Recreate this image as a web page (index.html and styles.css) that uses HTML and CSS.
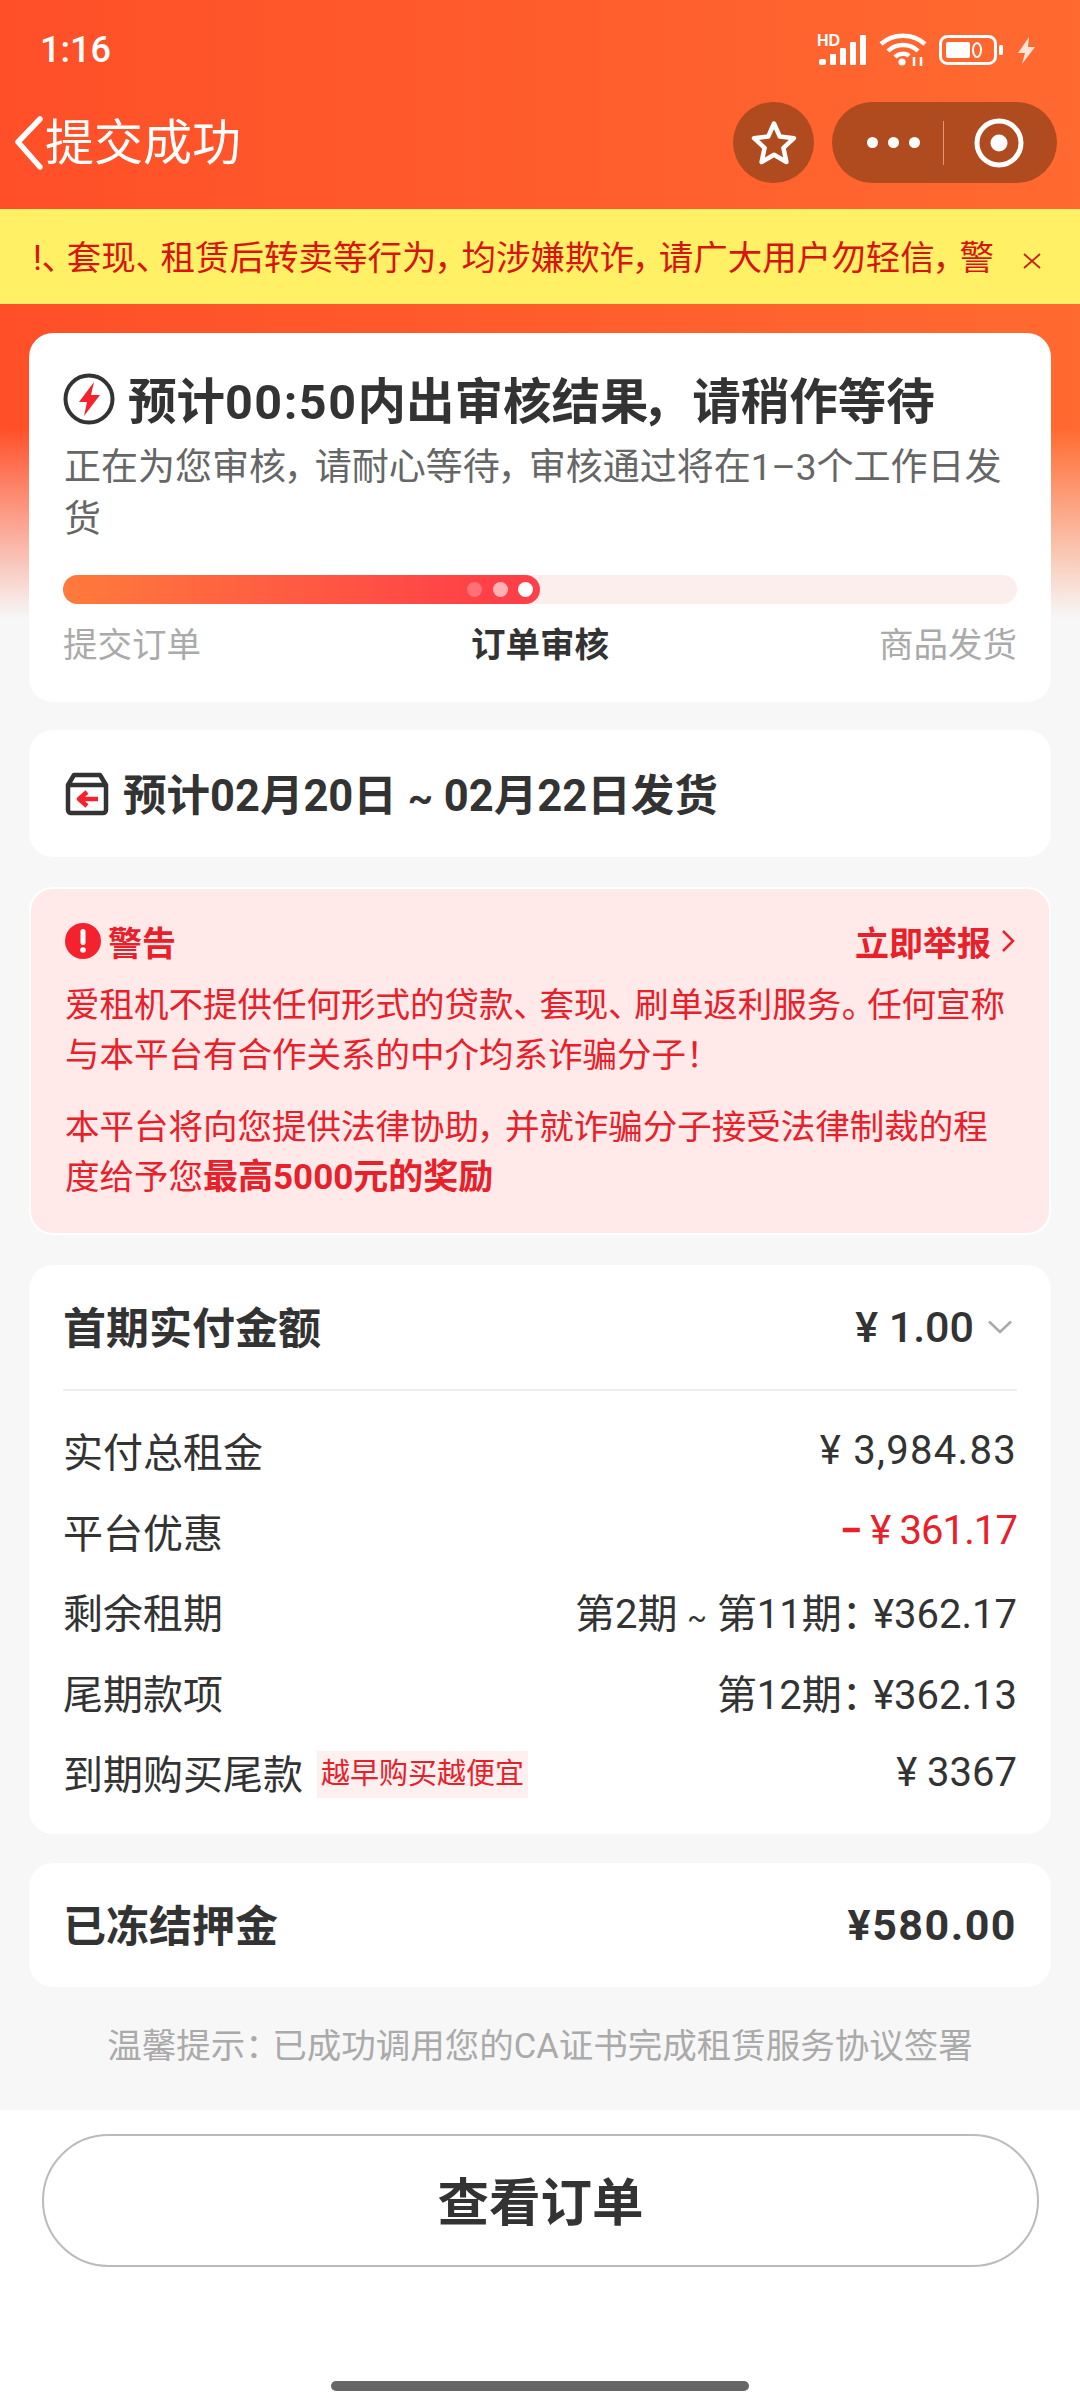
FILE: index.html
```html
<!DOCTYPE html>
<html lang="zh-CN">
<head>
<meta charset="utf-8">
<title>提交成功</title>
<link rel="stylesheet" href="styles.css">
</head>
<body>
<div class="page">
  <div class="statusbar">
    <span class="time">1:16</span>
    <div class="status-icons">
      <svg class="ic-signal" width="50" height="32" viewBox="0 0 50 32">
        <text class="hd" x="0" y="12">HD</text>
        <rect x="2" y="25" width="7" height="6" rx="2" fill="#fff"/>
        <rect x="13" y="20" width="6" height="11" rx="1" fill="#fff"/>
        <rect x="23" y="14" width="6" height="17" rx="1" fill="#fff"/>
        <rect x="33" y="8" width="6" height="23" rx="1" fill="#fff"/>
        <rect x="43" y="1" width="6" height="30" rx="1" fill="#fff"/>
      </svg>
      <svg class="ic-wifi" width="48" height="34" viewBox="0 0 48 34" fill="none" stroke="#fff" stroke-width="4.5">
        <path d="M2 11C14 0 34 0 46 11"/>
        <path d="M9 18C17 10 31 10 39 18"/>
        <path d="M16 24C20 20 27 20 30 23"/>
        <circle cx="23" cy="29" r="3.6" fill="#fff" stroke="none"/>
        <path d="M35 24v9M42 24v9" stroke-width="2.5"/>
      </svg>
      <svg class="ic-batt" width="64" height="30" viewBox="0 0 64 30">
        <rect x="1.5" y="1.5" width="55" height="27" rx="7" fill="none" stroke="#fff" stroke-width="3"/>
        <rect x="7" y="7" width="24" height="16" rx="2" fill="#fff"/>
        <ellipse cx="38" cy="15" rx="4" ry="7" fill="none" stroke="#fff" stroke-width="2"/>
        <rect x="60" y="10" width="4" height="10" rx="1.5" fill="#fff"/>
      </svg>
      <svg class="ic-bolt" width="19" height="27" viewBox="0 0 19 27"><path d="M12 0 1 16h7l-3 11L18 10h-7z" fill="#ffe3d6"/></svg>
    </div>
  </div>

  <div class="navbar">
    <div class="nav-left">
      <svg width="30" height="54" viewBox="0 0 30 54" fill="none" stroke="#fff" stroke-width="5.5" stroke-linecap="round" stroke-linejoin="round"><path d="M26 3 4 26l22 25"/></svg>
      <span class="nav-title">提交成功</span>
    </div>
    <div class="nav-right">
      <div class="star-btn">
        <svg width="46" height="46" viewBox="0 0 46 46" fill="none" stroke="#fff" stroke-width="4.5" stroke-linejoin="round"><path d="M23 3.5 28.8 16.6 43 18.2 32.4 27.8 35.4 42 23 34.8 10.6 42 13.600 27.8 3 18.200 17.200 16.600z"/></svg>
      </div>
      <div class="capsule">
        <div class="cap-dots"><i></i><i></i><i></i></div>
        <div class="cap-sep"></div>
        <svg width="50" height="50" viewBox="0 0 50 50"><circle cx="25" cy="25" r="22" fill="none" stroke="#fff" stroke-width="5"/><circle cx="25" cy="25" r="8.500" fill="#fff"/></svg>
      </div>
    </div>
  </div>

  <div class="notice">
    <div class="notice-text">!<span class="pu">、</span>套现<span class="pu">、</span>租赁后转卖等行为<span class="pu">，</span>均涉嫌欺诈<span class="pu">，</span>请广大用户勿轻信<span class="pu">，</span>警</div>
    <svg class="notice-x" width="20" height="18" viewBox="0 0 20 18" stroke="#c8201c" stroke-width="1.800" fill="none"><path d="M2 2 18 16M18 2 2 16"/></svg>
  </div>

  <main class="content">
    <section class="card card-status">
      <div class="status-title">
        <svg width="52" height="52" viewBox="0 0 52 52"><circle cx="26" cy="26" r="23.500" fill="none" stroke="#333" stroke-width="4"/><path d="M31 9 16 29h8l-3 14 16-21h-9z" fill="#f5222d"/></svg>
        <span>预计<span class="num">00:50</span>内出审核结果<span class="pu pu-t">，</span>请稍作等待</span>
      </div>
      <p class="status-sub">正在为您审核<span class="pu">，</span>请耐心等待<span class="pu">，</span>审核通过将在1–3个工作日发货</p>
      <div class="progress">
        <div class="progress-fill">
          <i class="d1"></i><i class="d2"></i><i class="d3"></i>
        </div>
      </div>
      <div class="steps">
        <span>提交订单</span>
        <span class="step-on">订单审核</span>
        <span>商品发货</span>
      </div>
    </section>

    <section class="card card-ship">
      <svg width="44" height="44" viewBox="0 0 44 44" fill="none">
        <path d="M3 13 9 3h26l6 10v25a3 3 0 0 1-3 3H6a3 3 0 0 1-3-3z M3 13h38" stroke="#333" stroke-width="4.500" stroke-linejoin="round"/>
        <path d="M14 27h19M22 20l-8 7 8 7" stroke="#f5222d" stroke-width="4.500" stroke-linejoin="round"/>
      </svg>
      <span class="ship-text">预计02月20日 <span class="tilde">~</span> 02月22日发货</span>
    </section>

    <section class="warn">
      <div class="warn-head">
        <div class="warn-label">
          <svg width="36" height="36" viewBox="0 0 36 36"><circle cx="18" cy="18" r="18" fill="#f5222d"/><rect x="15.500" y="6" width="5" height="16" rx="2.500" fill="#fff"/><circle cx="18" cy="27" r="2.800" fill="#fff"/></svg>
          <span>警告</span>
        </div>
        <div class="warn-link">
          <span>立即举报</span>
          <svg width="14" height="24" viewBox="0 0 14 24" fill="none" stroke="#e8202a" stroke-width="2.500"><path d="M2 2 12 12 2 22"/></svg>
        </div>
      </div>
      <p class="warn-p">爱租机不提供任何形式的贷款<span class="pu">、</span>套现<span class="pu">、</span>刷单返利服务<span class="pu">。</span>任何宣称与本平台有合作关系的中介均系诈骗分子！</p>
      <p class="warn-p warn-p2">本平台将向您提供法律协助<span class="pu">，</span>并就诈骗分子接受法律制裁的程度给予您<b>最高5000元的奖励</b></p>
    </section>

    <section class="card card-pay">
      <div class="pay-head">
        <span class="pay-title">首期实付金额</span>
        <div class="pay-amount">
          <span>¥ 1.00</span>
          <svg width="24" height="14" viewBox="0 0 24 14" fill="none" stroke="#aaa" stroke-width="2.500"><path d="M1 1.500 12 12 23 1.500"/></svg>
        </div>
      </div>
      <div class="pay-rows">
        <div class="row"><span>实付总租金</span><span class="wide">¥ 3,984.83</span></div>
        <div class="row"><span>平台优惠</span><span class="red"><b class="minus">−</b> ¥ 361.17</span></div>
        <div class="row"><span>剩余租期</span><span>第2期 <span class="tilde">~</span> 第11期<span class="pu">：</span>¥362.17</span></div>
        <div class="row"><span>尾期款项</span><span>第12期<span class="pu">：</span>¥362.13</span></div>
        <div class="row"><span class="row-left">到期购买尾款<em class="tag">越早购买越便宜</em></span><span>¥ 3367</span></div>
      </div>
    </section>

    <section class="card card-deposit">
      <span class="dep-label">已冻结押金</span>
      <span class="dep-val">¥580.00</span>
    </section>

    <p class="hint">温馨提示<span class="pu">：</span>已成功调用您的CA证书完成租赁服务协议签署</p>
  </main>

  <footer class="footer">
    <button class="btn"><span class="btn-text">查看订单</span></button>
    <div class="home-bar"></div>
  </footer>
</div>
</body>
</html>
```
FILE: styles.css
```css
* { box-sizing: border-box; }
html, body { margin: 0; padding: 0; }
body {
  width: 1080px;
  height: 2408px;
  overflow: hidden;
  font-family: Roboto, "Noto Sans CJK SC", sans-serif;
  color: #333;
}
p { margin: 0; }
em { font-style: normal; }
.pu { font-feature-settings: "palt"; padding-right: 0.28em; }
.tilde { font-size: 0.72em; }

.page {
  width: 1080px;
  height: 2408px;
  display: flex;
  flex-direction: column;
  background-color: #f7f7f7;
  background-image:
    linear-gradient(to bottom, rgba(247,247,247,0) 428px, #f7f7f7 618px),
    linear-gradient(to right, #ff4f28, #ff6a30);
  background-size: 1080px 618px;
  background-repeat: no-repeat;
}

.statusbar {
  height: 96px;
  display: flex;
  justify-content: space-between;
  align-items: center;
  padding: 4px 44px 0 40px;
  color: #fff;
}
.time { font-size: 36px; font-weight: 500; }
.status-icons { display: flex; align-items: center; gap: 12px; }
.ic-signal { overflow: visible; }
.hd { font: 700 16px "Liberation Sans", sans-serif; fill: #fff; }
.ic-bolt { margin-left: 2px; }

.navbar {
  height: 113px;
  display: flex;
  justify-content: space-between;
  padding: 6px 23px 0 14px;
}
.nav-left { display: flex; align-items: center; height: 81px; gap: 1px; }
.nav-title { font-size: 49px; color: #fff; padding-bottom: 8px; }
.nav-right { display: flex; gap: 18px; }
.star-btn {
  width: 81px;
  height: 81px;
  border-radius: 50%;
  background: #b04a1f;
  display: flex;
  align-items: center;
  justify-content: center;
}
.capsule {
  width: 225px;
  height: 81px;
  border-radius: 41px;
  background: #b04a1f;
  display: flex;
  align-items: center;
  padding-left: 35px;
}
.cap-dots { display: flex; gap: 10px; }
.cap-dots i { width: 11px; height: 11px; border-radius: 50%; background: #fff; display: block; }
.cap-sep { width: 1px; height: 44px; background: #e09a78; margin: 0 30px 0 23px; }

.notice {
  height: 95px;
  background: #fff065;
  display: flex;
  align-items: center;
  padding: 0 38px 0 33px;
  justify-content: space-between;
}
.notice-text {
  width: 970px;
  overflow: hidden;
  white-space: nowrap;
  font-size: 34.500px;
  color: #d8140e;
  padding-bottom: 3px;
}
.notice-text .pu { padding-right: 0.22em; }
.notice-x { margin-top: 8px; }

.content {
  flex: 1;
  padding: 29px 29px 0;
  display: flex;
  flex-direction: column;
}
.card {
  background: #fff;
  border-radius: 24px;
}

.card-status { height: 369px; padding: 40px 34px 0; }
.status-title { display: flex; align-items: center; gap: 13px; height: 52px; font-size: 48.500px; font-weight: 700; }
.status-title > span { padding-bottom: 2px; white-space: nowrap; }
.status-title .pu-t { padding-right: 0.4em; }
.num { letter-spacing: 1.500px; }
.status-sub { margin-top: 17px; padding-left: 1px; font-size: 37px; line-height: 52px; color: #666; }
.progress {
  margin-top: 29px;
  height: 29px;
  border-radius: 15px;
  background: #fdeeee;
}
.progress-fill {
  width: 477px;
  height: 29px;
  border-radius: 15px;
  background: linear-gradient(to right, #ff7a3c, #ff4048 90%);
  position: relative;
}
.progress-fill i { position: absolute; top: 7px; width: 15px; height: 15px; border-radius: 50%; background: #fff; }
.progress-fill .d1 { left: 404px; opacity: .25; }
.progress-fill .d2 { left: 430px; opacity: .6; }
.progress-fill .d3 { left: 455px; }
.steps { margin-top: 17px; display: flex; justify-content: space-between; font-size: 34.500px; line-height: 48px; color: #aaa; }
.step-on { color: #333; font-weight: 700; }

.card-ship {
  margin-top: 28px;
  height: 127px;
  padding: 0 36px;
  display: flex;
  align-items: center;
  gap: 14px;
}
.ship-text { font-size: 43.500px; font-weight: 700; padding-bottom: 3px; }
.ship-text .tilde { font-size: 0.9em; }

.warn {
  margin-top: 30px;
  height: 348px;
  background: #ffe9e9;
  border: 2px solid #fff;
  border-radius: 24px;
  padding: 34px 34px 0;
  color: #e8202a;
}
.warn-head { display: flex; justify-content: space-between; align-items: center; height: 36px; font-size: 34px; font-weight: 700; }
.warn-label { display: flex; align-items: center; gap: 7px; }
.warn-link { display: flex; align-items: center; gap: 10px; }
.warn-p { font-size: 34.500px; line-height: 50px; }
.warn-p .pu { padding-right: 0.25em; }
.warn-head + .warn-p { margin-top: 21px; }
.warn-p2 { margin-top: 22px; }
.warn-p b { font-size: 35px; font-weight: 700; }

.card-pay { margin-top: 30px; height: 569px; padding: 0 34px; }
.pay-head {
  height: 126px;
  display: flex;
  align-items: center;
  justify-content: space-between;
  border-bottom: 2px solid #eee;
}
.pay-title { font-size: 43px; font-weight: 700; padding-bottom: 4px; }
.pay-amount { display: flex; align-items: center; gap: 14px; font-size: 43px; font-weight: 500; padding-right: 5px; }
.pay-rows { padding-top: 19px; }
.row {
  height: 80.500px;
  display: flex;
  align-items: center;
  justify-content: space-between;
  font-size: 40px;
}
.row-left { display: flex; align-items: center; gap: 14px; }
.red { color: #e8202a; letter-spacing: -0.9px; }
.minus { font-weight: 700; }
.wide { letter-spacing: 1.300px; }
.tag {
  font-size: 29px;
  line-height: 47px;
  height: 47px;
  padding: 0 4px;
  background: #fff0f0;
  color: #e8202a;
  margin-top: 4px;
}

.card-deposit {
  margin-top: 29px;
  height: 124px;
  padding: 0 34px;
  display: flex;
  align-items: center;
  justify-content: space-between;
  font-weight: 700;
}
.dep-label { font-size: 43px; padding-bottom: 4px; }
.dep-val { font-size: 43px; letter-spacing: 1.500px; }

.hint { margin-top: 35px; text-align: center; font-size: 34.500px; line-height: 48px; color: #aaa; }

.footer {
  height: 298px;
  background: #fff;
  padding-top: 24px;
  display: flex;
  flex-direction: column;
  align-items: center;
}
.btn {
  width: 997px;
  height: 133px;
  margin-left: 1px;
  padding: 0 0 4px;
  background: #fff;
  border: 2px solid #bbb;
  border-radius: 67px;
  font-family: inherit;
  color: #333;
}
.btn-text { font-size: 51.500px; font-weight: 700; }
.home-bar { margin-top: 114px; width: 418px; height: 10px; border-radius: 5px; background: #666; }
```
